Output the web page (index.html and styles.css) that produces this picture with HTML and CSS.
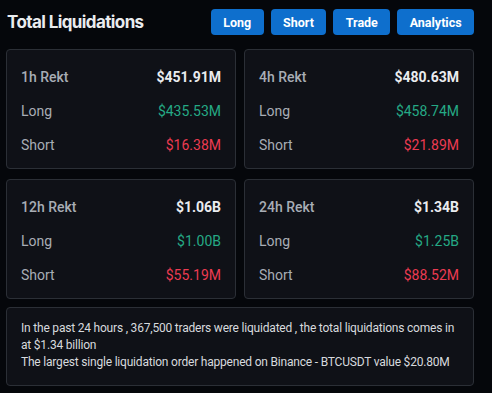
FILE: index.html
```html
<!DOCTYPE html>
<html lang="en">
<head>
    <meta charset="UTF-8">
    <meta name="viewport" content="width=device-width, initial-scale=1.0">
    <title>Total Liquidations</title>
    <link rel="stylesheet" href="styles.css">
</head>
<body>
    <div id="container">
        <div class="header">
            <h1>Total Liquidations</h1>
            <div class="tabs">
                <button>Long</button>
                <button>Short</button>
                <button>Trade</button>
                <button>Analytics</button>
            </div>
        </div>

        <div class="grid">
            <div class="card">
                <div class="row"><span class="label head">1h Rekt</span><span class="value total">$451.91M</span></div>
                <div class="row"><span class="label">Long</span><span class="value long">$435.53M</span></div>
                <div class="row"><span class="label">Short</span><span class="value short">$16.38M</span></div>
            </div>
            <div class="card">
                <div class="row"><span class="label head">4h Rekt</span><span class="value total">$480.63M</span></div>
                <div class="row"><span class="label">Long</span><span class="value long">$458.74M</span></div>
                <div class="row"><span class="label">Short</span><span class="value short">$21.89M</span></div>
            </div>
            <div class="card">
                <div class="row"><span class="label head">12h Rekt</span><span class="value total">$1.06B</span></div>
                <div class="row"><span class="label">Long</span><span class="value long">$1.00B</span></div>
                <div class="row"><span class="label">Short</span><span class="value short">$55.19M</span></div>
            </div>
            <div class="card">
                <div class="row"><span class="label head">24h Rekt</span><span class="value total">$1.34B</span></div>
                <div class="row"><span class="label">Long</span><span class="value long">$1.25B</span></div>
                <div class="row"><span class="label">Short</span><span class="value short">$88.52M</span></div>
            </div>
        </div>

        <div class="summary">
            <p>In the past 24 hours , 367,500 traders were liquidated , the total liquidations comes in at $1.34 billion</p>
            <p>The largest single liquidation order happened on Binance - BTCUSDT value $20.80M</p>
        </div>
    </div>
</body>
</html>
```

FILE: styles.css
```css
body {
    margin: 0;
    padding: 0;
    font-family: Roboto, "Noto Sans", sans-serif;
    background: #05070b;
    color: #eaecef;
    overflow: hidden;
}

#container {
    width: 468px;
    padding: 9px 0 0 6px;
}

.header {
    display: flex;
    align-items: center;
    justify-content: space-between;
    height: 26px;
    margin-bottom: 14px;
}

.header h1 {
    margin: 0 0 0 1px;
    font-family: Inter, sans-serif;
    font-size: 17px;
    font-weight: 700;
    letter-spacing: -0.6px;
    color: #eaecef;
}

.tabs {
    display: flex;
    gap: 7px;
}

.tabs button {
    background: #0e6fcd;
    color: white;
    border: none;
    height: 26px;
    padding: 0 12.4px;
    border-radius: 4px;
    font-family: inherit;
    font-size: 12.5px;
    font-weight: 700;
    cursor: pointer;
}

.grid {
    display: grid;
    grid-template-columns: 1fr 1fr;
    column-gap: 8px;
    row-gap: 10px;
}

.card {
    background: #0f1117;
    border: 1px solid #2b2f36;
    border-radius: 4px;
    padding: 10px 14px 6px 14px;
}

.row {
    display: flex;
    justify-content: space-between;
    align-items: center;
    height: 34px;
    font-size: 14px;
}

.label {
    color: #a8adb5;
}

.label.head {
    font-weight: 500;
}

.value.total {
    font-weight: 700;
    color: #eaecef;
}

.value.long {
    color: #25a985;
}

.value.short {
    color: #ec3b52;
}

.summary {
    margin-top: 8px;
    background: #0f1117;
    border: 1px solid #2b2f36;
    border-radius: 4px;
    padding: 12px 10px 14px 14px;
    font-size: 12px;
    letter-spacing: -0.2px;
    line-height: 17px;
    color: #d7dade;
}

.summary p {
    margin: 0;
}
```
